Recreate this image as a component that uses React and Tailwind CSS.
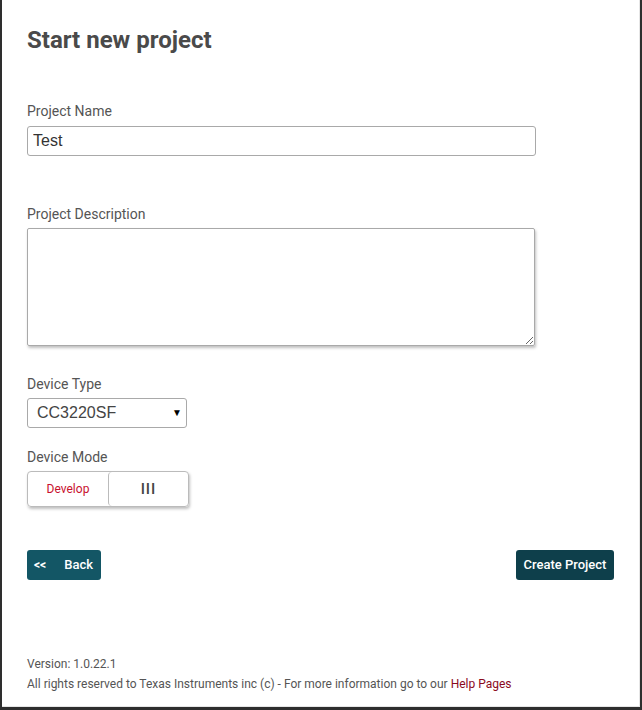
import React, { useState } from "react";

const roboto = { fontFamily: "Roboto, 'Liberation Sans', sans-serif" };

const Label = ({ children }) => (
  <label className="block text-[14px] leading-[17px] text-[#555]">
    {children}
  </label>
);

const App = () => {
  const [name, setName] = useState("Test");
  const [description, setDescription] = useState("");
  const [device, setDevice] = useState("CC3220SF");

  return (
    <div className="min-h-[710px] bg-[#2e2e2e] pl-[2px] pr-[2px] pb-[3px]">
      <div
        className="flex h-[707px] flex-col border-r border-b border-[#e6e6e6] bg-white pl-[25px] pr-[25px]"
        style={roboto}
      >
        <h1 className="mt-[26px] text-[24px] font-bold leading-[28px] text-[#4a4a4a]">
          Start new project
        </h1>

        <div className="mt-[49px]">
          <Label>Project Name</Label>
          <input
            value={name}
            onChange={(e) => setName(e.target.value)}
            className="mt-[6px] block h-[30px] w-[509px] rounded-[3px] border border-[#a9a9a9] px-[5px] font-['Liberation_Sans',sans-serif] text-[16px] text-[#333] outline-none"
          />
        </div>

        <div className="mt-[50px]">
          <Label>Project Description</Label>
          <textarea
            value={description}
            onChange={(e) => setDescription(e.target.value)}
            className="mt-[5px] block h-[118px] w-[508px] rounded-[2px] border border-[#a9a9a9] shadow-[1px_2px_3px_rgba(0,0,0,0.25)] outline-none"
          />
        </div>

        <div className="mt-[30px]">
          <Label>Device Type</Label>
          <div className="relative mt-[5px] h-[30px] w-[160px]">
            <select
              value={device}
              onChange={(e) => setDevice(e.target.value)}
              className="h-full w-full appearance-none rounded-[3px] border border-[#a9a9a9] bg-white px-[9px] font-['Liberation_Sans',sans-serif] text-[16px] text-[#444] outline-none"
            >
              <option>CC3220SF</option>
              <option>CC3220S</option>
              <option>CC3220R</option>
            </select>
            <span className="pointer-events-none absolute right-[5px] top-[7px] text-[10px] text-black">
              ▼
            </span>
          </div>
        </div>

        <div className="mt-[21px]">
          <Label>Device Mode</Label>
          <div className="mt-[5px] flex h-[36px] w-[162px] rounded-[4px] border border-[#bbb] shadow-[1px_2px_3px_rgba(0,0,0,0.25)]">
            <div className="flex w-[80px] items-center justify-center text-[12px] text-[#c8102e]">
              Develop
            </div>
            <div className="flex flex-1 items-center justify-center rounded-[4px] border-l border-[#bbb] text-[15px] font-medium tracking-[1px] text-[#444]">
              III
            </div>
          </div>
        </div>

        <div className="mt-[43px] flex justify-between">
          <button className="flex h-[30px] w-[74px] items-center gap-[18px] rounded-[3px] bg-[#135665] pl-[7px] text-[13px] font-medium text-white">
            <span className="text-[12px] font-bold">&lt;&lt;</span>
            <span>Back</span>
          </button>
          <button className="h-[30px] w-[98px] rounded-[3px] bg-[#0e3f4b] text-[13px] font-medium text-white">
            Create Project
          </button>
        </div>

        <div className="mt-auto pb-[12px] text-[12px] leading-[20px] text-[#555]">
          <p>Version: 1.0.22.1</p>
          <p>
            All rights reserved to Texas Instruments inc (c) - For more
            information go to our{" "}
            <a href="#help" className="text-[#8b0a1e]">
              Help Pages
            </a>
          </p>
        </div>
      </div>
    </div>
  );
};

export default App;
